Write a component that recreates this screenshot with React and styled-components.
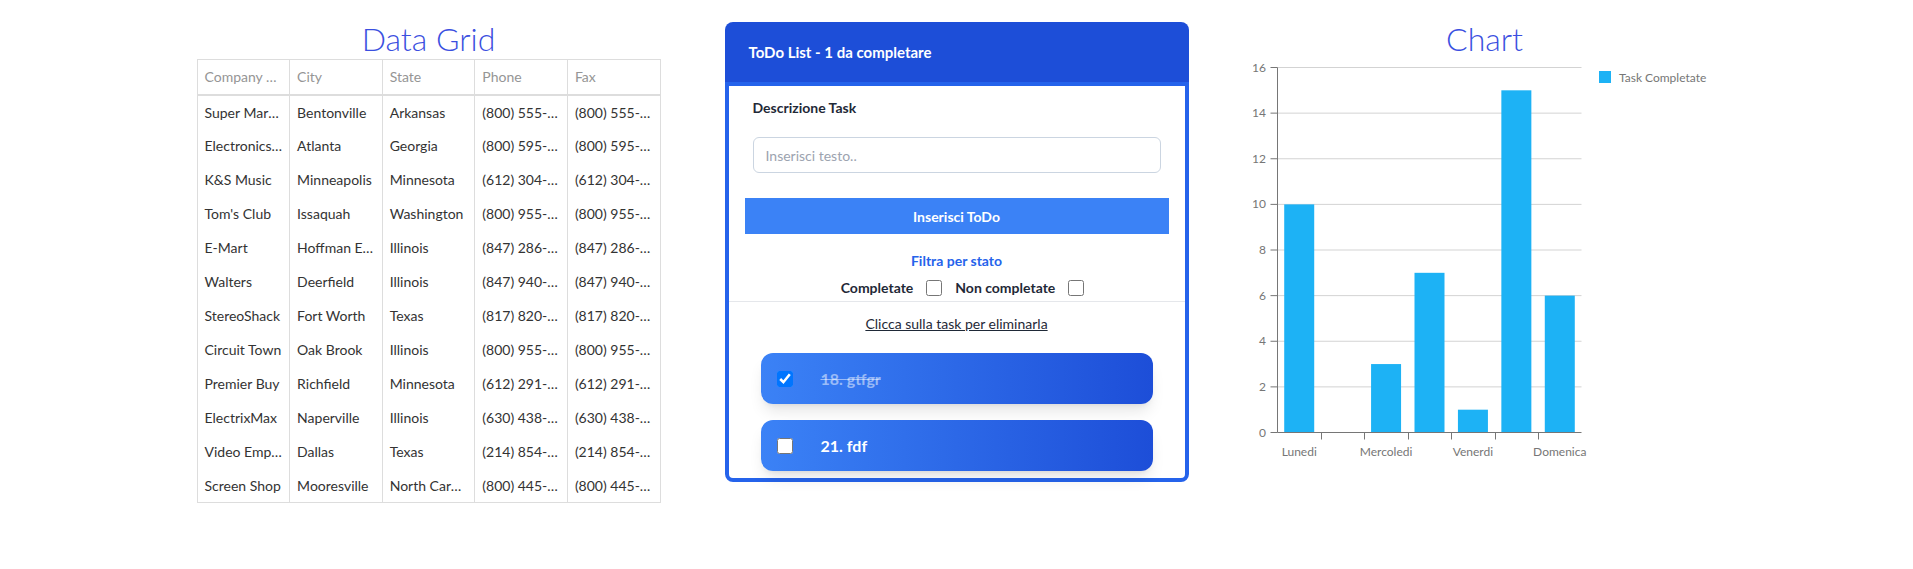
import React, { useState } from 'react';
import styled, { createGlobalStyle } from 'styled-components';

const GlobalStyle = createGlobalStyle`
    body {
        margin: 0;
        background: #fff;
        font-family: Lato, "Liberation Sans", sans-serif;
    }
    * {
        box-sizing: border-box;
    }
`;

const customers = [
    ['Super Mart of the West', 'Bentonville', 'Arkansas', '(800) 555-2797', '(800) 555-2171'],
    ['Electronics Depot', 'Atlanta', 'Georgia', '(800) 595-3232', '(800) 595-3231'],
    ['K&S Music', 'Minneapolis', 'Minnesota', '(612) 304-6073', '(612) 304-6074'],
    ["Tom's Club", 'Issaquah', 'Washington', '(800) 955-2292', '(800) 955-2293'],
    ['E-Mart', 'Hoffman Estates', 'Illinois', '(847) 286-2500', '(847) 286-2501'],
    ['Walters', 'Deerfield', 'Illinois', '(847) 940-2500', '(847) 940-2501'],
    ['StereoShack', 'Fort Worth', 'Texas', '(817) 820-0741', '(817) 820-0742'],
    ['Circuit Town', 'Oak Brook', 'Illinois', '(800) 955-2929', '(800) 955-9392'],
    ['Premier Buy', 'Richfield', 'Minnesota', '(612) 291-1000', '(612) 291-2001'],
    ['ElectrixMax', 'Naperville', 'Illinois', '(630) 438-7800', '(630) 438-7801'],
    ['Video Emporium', 'Dallas', 'Texas', '(214) 854-3000', '(214) 854-3001'],
    ['Screen Shop', 'Mooresville', 'North Carolina', '(800) 445-6937', '(800) 445-6938'],
];

const columns = ['Company Name', 'City', 'State', 'Phone', 'Fax'];

const weekData = [
    { day: 'Lunedi', value: 10 },
    { day: 'Martedi', value: 0 },
    { day: 'Mercoledi', value: 3 },
    { day: 'Giovedi', value: 7 },
    { day: 'Venerdi', value: 1 },
    { day: 'Sabato', value: 15 },
    { day: 'Domenica', value: 6 },
];

const DataGrid = () => (
    <GridTable>
        <thead>
            <tr>
                {columns.map((c) => <HeadCell key={c}>{c}</HeadCell>)}
            </tr>
        </thead>
        <tbody>
            {customers.map((row) => (
                <tr key={row[0]}>
                    {row.map((v, i) => <Cell key={i}>{v}</Cell>)}
                </tr>
            ))}
        </tbody>
    </GridTable>
);

const TodoCard = () => {
    const [todos, setTodos] = useState([
        { id: 18, text: 'gtfgr', done: true },
        { id: 21, text: 'fdf', done: false },
    ]);
    const [text, setText] = useState('');

    const toggle = (id) => {
        setTodos(todos.map((t) => (t.id === id ? { ...t, done: !t.done } : t)));
    };

    const left = todos.filter((t) => !t.done).length;

    return (
        <Card>
            <CardHeader>ToDo List - {left} da completare</CardHeader>
            <CardBody>
                <Field>
                    <FieldLabel>Descrizione Task</FieldLabel>
                    <TextInput
                        value={text}
                        onChange={(e) => setText(e.target.value)}
                        placeholder="Inserisci testo.."
                    />
                </Field>
                <AddButton type="button">Inserisci ToDo</AddButton>
                <FilterTitle>Filtra per stato</FilterTitle>
                <FilterRow>
                    <FilterOption>
                        Completate <Check type="checkbox" />
                    </FilterOption>
                    <FilterOption>
                        Non completate <Check type="checkbox" />
                    </FilterOption>
                </FilterRow>
                <Hint>Clicca sulla task per eliminarla</Hint>
                <TaskList>
                    {todos.map((t) => (
                        <TaskItem key={t.id}>
                            <Check type="checkbox" checked={t.done} onChange={() => toggle(t.id)} />
                            <TaskText done={t.done}>{t.id}. {t.text}</TaskText>
                        </TaskItem>
                    ))}
                </TaskList>
            </CardBody>
        </Card>
    );
};

// chart geometry, in svg units
const X0 = 24.5;
const X1 = 328.5;
const Y_TOP = 8.5;
const Y_ZERO = 373.5;
const MAX = 16;

const BarChart = ({ data }) => {
    const step = (X1 - X0) / data.length;
    const yOf = (v) => Y_ZERO - (v / MAX) * (Y_ZERO - Y_TOP);
    const ticks = [0, 2, 4, 6, 8, 10, 12, 14, 16];

    return (
        <ChartSvg width="464" height="405" viewBox="0 0 464 405">
            {ticks.map((t) => (
                <g key={t}>
                    {t > 0 && <line x1={X0} x2={X1} y1={yOf(t)} y2={yOf(t)} stroke="#d3d3d3" />}
                    <line x1={X0 - 7} x2={X0} y1={yOf(t)} y2={yOf(t)} stroke="#767676" />
                    <text x="13" y={yOf(t) + 4} textAnchor="end">{t}</text>
                </g>
            ))}
            {data.map((d, i) => {
                const cx = X0 + step * (i + 0.5);
                const top = yOf(d.value);
                return (
                    <g key={d.day}>
                        {d.value > 0 && (
                            <rect x={cx - 15} y={top} width="30" height={Y_ZERO - top} fill="#1db2f5" />
                        )}
                        {i > 0 && (
                            <line x1={Math.round(X0 + step * i) + 0.5} x2={Math.round(X0 + step * i) + 0.5} y1={Y_ZERO} y2={Y_ZERO + 7} stroke="#767676" />
                        )}
                        {i % 2 === 0 && (
                            <text x={cx} y="397" textAnchor="middle">{d.day}</text>
                        )}
                    </g>
                );
            })}
            <line x1={X0} x2={X0} y1={Y_TOP} y2={Y_ZERO} stroke="#767676" />
            <line x1={X0} x2={X1} y1={Y_ZERO} y2={Y_ZERO} stroke="#767676" />
            <rect x="346" y="12" width="12" height="12" fill="#1db2f5" />
            <text x="366" y="23">Task Completate</text>
        </ChartSvg>
    );
};

const App = () => (
    <>
        <GlobalStyle />
        <Page>
            <Column>
                <Title>Data Grid</Title>
                <DataGrid />
            </Column>
            <Column>
                <TodoCard />
            </Column>
            <Column>
                <Title>Chart</Title>
                <BarChart data={weekData} />
            </Column>
        </Page>
    </>
);

const Page = styled.div`
    display: flex;
    justify-content: center;
    align-items: flex-start;
    gap: 64px;
`;

const Column = styled.section`
    width: 464px;
    display: flex;
    flex-direction: column;
    align-items: center;
`;

const Title = styled.h2`
    margin: 0 0 1px;
    padding-top: 20px;
    font-size: 32px;
    line-height: 38px;
    font-weight: 300;
    color: #3b4fe0;
`;

const GridTable = styled.table`
    width: 464px;
    table-layout: fixed;
    border-collapse: collapse;
    border: 1px solid #ddd;
    font-size: 14px;
`;

const HeadCell = styled.th`
    height: 35px;
    padding: 0 7px;
    text-align: left;
    font-weight: 400;
    color: #959595;
    border-right: 1px solid #ddd;
    border-bottom: 2px solid #ddd;
    white-space: nowrap;
    overflow: hidden;
    text-overflow: ellipsis;
`;

const Cell = styled.td`
    height: 34px;
    padding: 0 7px;
    color: #333;
    border-right: 1px solid #ddd;
    white-space: nowrap;
    overflow: hidden;
    text-overflow: ellipsis;
`;

const Card = styled.div`
    width: 464px;
    margin-top: 22px;
    display: flex;
    flex-direction: column;
`;

const CardHeader = styled.div`
    height: 60px;
    padding: 0 24px;
    display: flex;
    align-items: center;
    background: #1d4ed8;
    border-radius: 8px 8px 0 0;
    color: #fff;
    font-size: 15px;
    font-weight: 700;
`;

const CardBody = styled.div`
    background: #fff;
    border: 4px solid #2563eb;
    border-radius: 0 0 8px 8px;
    padding: 12px 0 7px;
    display: flex;
    flex-direction: column;
`;

const Field = styled.div`
    padding: 0 24px;
    display: flex;
    flex-direction: column;
`;

const FieldLabel = styled.label`
    font-size: 14px;
    line-height: 20px;
    font-weight: 700;
    color: #1f2937;
`;

const TextInput = styled.input`
    margin-top: 19px;
    height: 36px;
    width: 100%;
    padding: 0 12px;
    border: 1px solid #cbd5e1;
    border-radius: 6px;
    font-family: inherit;
    font-size: 14px;
    color: #1f2937;
    outline: none;

    &::placeholder {
        color: #9ca3af;
    }
`;

const AddButton = styled.button`
    margin: 25px 16px 0;
    height: 36px;
    border: none;
    background: #3b82f6;
    color: #fff;
    font-family: inherit;
    font-size: 14px;
    font-weight: 700;
    cursor: pointer;
`;

const FilterTitle = styled.div`
    margin-top: 17px;
    text-align: center;
    font-size: 14px;
    line-height: 20px;
    font-weight: 700;
    color: #2563eb;
`;

const FilterRow = styled.div`
    margin-top: 7px;
    padding: 0 0 3px 12px;
    display: flex;
    justify-content: center;
    gap: 13px;
    border-bottom: 1px solid #e5e7eb;
    line-height: 20px;
`;

const FilterOption = styled.label`
    display: flex;
    align-items: center;
    gap: 13px;
    font-size: 14px;
    font-weight: 700;
    color: #1f2937;
`;

const Check = styled.input`
    width: 16px;
    height: 16px;
    margin: 0;
    flex-shrink: 0;
`;

const Hint = styled.p`
    margin: 12px 0 0;
    text-align: center;
    font-size: 14px;
    line-height: 20px;
    color: #1f2937;
    text-decoration: underline;
`;

const TaskList = styled.ul`
    list-style: none;
    margin: 19px 0 0;
    padding: 0 32px;
    display: flex;
    flex-direction: column;
    gap: 16px;
`;

const TaskItem = styled.li`
    height: 51px;
    padding: 0 16px;
    display: flex;
    align-items: center;
    border-radius: 12px;
    background: linear-gradient(to right, #3b82f6, #1d4ed8);
    box-shadow: 0 10px 15px -3px rgba(0, 0, 0, 0.1), 0 4px 6px -4px rgba(0, 0, 0, 0.1);
    cursor: pointer;
`;

const TaskText = styled.span`
    margin-left: 28px;
    font-size: 16px;
    font-weight: 700;
    color: ${(props) => (props.done ? 'rgba(255, 255, 255, 0.5)' : '#fff')};
    text-decoration: ${(props) => (props.done ? 'line-through' : 'none')};
`;

const ChartSvg = styled.svg`
    display: block;
    font-family: Lato, "Liberation Sans", sans-serif;
    font-size: 12px;

    text {
        fill: #767676;
    }
`;

export default App;
